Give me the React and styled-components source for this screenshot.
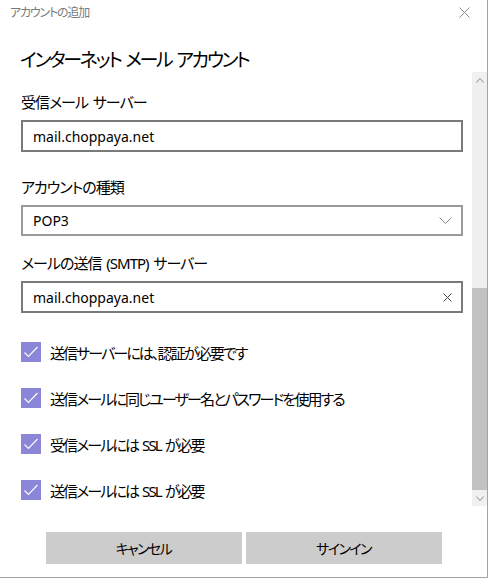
import React from "react";
import styled, { createGlobalStyle } from "styled-components";

const Global = createGlobalStyle`
  html, body { margin: 0; padding: 0; background: #fff; }
  body {
    font-family: "Noto Sans", "Noto Sans CJK JP", sans-serif;
    font-feature-settings: "palt";
    color: #000;
  }
`;

const Window = styled.div`
  width: 487px;
  height: 577px;
  border-right: 1px solid #a3a3a3;
  border-bottom: 1px solid #a3a3a3;
  background: #fff;
  display: flex;
  flex-direction: column;
`;

const TitleBar = styled.div`
  height: 24px;
  display: flex;
  align-items: center;
  justify-content: space-between;
  padding: 0 17px 0 10px;
  font-size: 12px;
  letter-spacing: -1.2px;
  color: #7a7a7a;
`;

const Heading = styled.h1`
  margin: 0;
  padding: 24px 0 0 20px;
  height: 24px;
  line-height: 24px;
  font-size: 19px;
  letter-spacing: -2.3px;
  word-spacing: 2px;
  font-weight: 400;
`;

const ScrollRow = styled.div`
  display: flex;
  height: 434px;
`;

const Content = styled.div`
  flex: 1;
  padding: 0 9px 0 21px;
  display: flex;
  flex-direction: column;
`;

const Label = styled.div`
  margin-top: ${(p) => p.$top}px;
  margin-bottom: 8px;
  height: 20px;
  line-height: 20px;
  font-size: 15px;
  letter-spacing: -1px;
  word-spacing: 2px;
`;

const Field = styled.div`
  height: ${(p) => (p.$light ? 31 : 32)}px;
  box-sizing: border-box;
  border: 2px solid ${(p) => (p.$light ? "#9a9a9a" : "#7a7a7a")};
  display: flex;
  align-items: center;
  justify-content: space-between;
  padding: 0 9px 0 10px;
  font-size: 14px;
`;

const CheckRow = styled.div`
  display: flex;
  align-items: center;
  gap: 9px;
  height: 20px;
  margin-top: ${(p) => p.$top}px;
  font-size: 15px;
  letter-spacing: -1.9px;
  word-spacing: 2px;
`;

const Box = styled.div`
  width: 20px;
  height: 20px;
  background: #8b86d8;
  flex: none;
  display: flex;
`;

const Scrollbar = styled.div`
  width: 15px;
  background: #f0f0f0;
  display: flex;
  flex-direction: column;
`;

const ArrowCell = styled.div`
  height: 16px;
  display: flex;
  align-items: center;
  justify-content: center;
  flex: none;
`;

const Track = styled.div`
  flex: 1;
  display: flex;
  flex-direction: column;
  justify-content: flex-end;
`;

const Thumb = styled.div`
  height: 202px;
  background: #c2c2c2;
`;

const Footer = styled.div`
  flex: 1;
  display: flex;
  justify-content: center;
  align-items: flex-start;
  gap: 4px;
  padding-top: 26px;
`;

const Button = styled.button`
  width: 196px;
  height: 32px;
  border: none;
  background: #cccccc;
  font-family: inherit;
  font-feature-settings: "palt";
  font-size: 14px;
  letter-spacing: -1.6px;
  color: #000;
  padding: 0;
`;

const Chevron = ({ up, color = "#8a8a8a", w = 8, h = 5 }) => (
  <svg width={w} height={h} viewBox={`0 0 ${w} ${h}`}>
    <polyline
      points={up ? `0.5,${h - 0.5} ${w / 2},0.5 ${w - 0.5},${h - 0.5}` : `0.5,0.5 ${w / 2},${h - 0.5} ${w - 0.5},0.5`}
      fill="none"
      stroke={color}
      strokeWidth="1"
    />
  </svg>
);

const Cross = ({ size, color }) => (
  <svg width={size} height={size} viewBox={`0 0 ${size} ${size}`}>
    <path d={`M0.5 0.5 L${size - 0.5} ${size - 0.5} M${size - 0.5} 0.5 L0.5 ${size - 0.5}`} stroke={color} strokeWidth="1" />
  </svg>
);

const Check = () => (
  <svg width="20" height="20" viewBox="0 0 20 20">
    <polyline points="3.5,10.5 7.5,14.5 16.5,5" fill="none" stroke="#fff" strokeWidth="1.1" />
  </svg>
);

const checks = [
  "送信サーバーには、認証が必要です",
  "送信メールに同じユーザー名とパスワードを使用する",
  "受信メールには SSL が必要",
  "送信メールには SSL が必要",
];

export default function App() {
  return (
    <>
      <Global />
      <Window>
        <TitleBar>
          <span>アカウントの追加</span>
          <Cross size={11} color="#8a8a8a" />
        </TitleBar>
        <Heading>インターネット メール アカウント</Heading>
        <ScrollRow>
          <Content>
            <Label $top={20}>受信メール サーバー</Label>
            <Field>mail.choppaya.net</Field>
            <Label $top={25}>アカウントの種類</Label>
            <Field $light>
              POP3
              <Chevron w={13} h={7} color="#8a8a8a" />
            </Field>
            <Label $top={17}>メールの送信 (SMTP) サーバー</Label>
            <Field>
              mail.choppaya.net
              <Cross size={9} color="#444" />
            </Field>
            {checks.map((t, i) => (
              <CheckRow key={i} $top={i === 0 ? 29 : 26}>
                <Box>
                  <Check />
                </Box>
                <span>{t}</span>
              </CheckRow>
            ))}
          </Content>
          <Scrollbar>
            <ArrowCell>
              <Chevron up />
            </ArrowCell>
            <Track>
              <Thumb />
            </Track>
            <ArrowCell>
              <Chevron />
            </ArrowCell>
          </Scrollbar>
        </ScrollRow>
        <Footer>
          <Button>キャンセル</Button>
          <Button>サインイン</Button>
        </Footer>
      </Window>
    </>
  );
}
